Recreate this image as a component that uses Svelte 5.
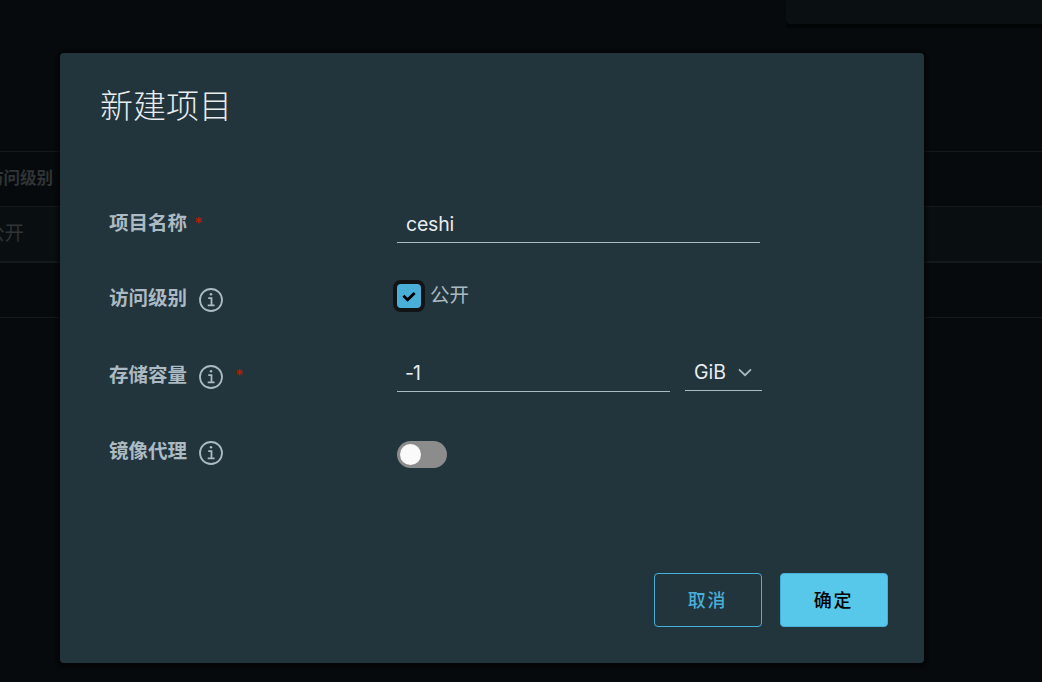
<script lang="ts">
    let name = $state("ceshi");
    let quota = $state("-1");
    let isPublic = $state(true);
    let proxyCache = $state(false);
</script>

{#snippet info()}
    <svg class="info" viewBox="0 0 24 24" aria-hidden="true">
        <circle cx="12" cy="12" r="11" />
        <circle class="dot" cx="12" cy="6.3" r="1.25" />
        <path d="M9.2 10.2h3.3v7.3M8.7 17.4h6.9" />
    </svg>
{/snippet}

<div class="page">
    <div class="top"><div class="summary"></div></div>
    <div class="table">
        <div class="tr head"><span>访问级别</span></div>
        <div class="tr row"><span>公开</span></div>
        <div class="tr foot"></div>
    </div>

    <div class="modal" role="dialog" aria-label="新建项目">
        <h3>新建项目</h3>
        <form>
            <div class="field name">
                <label for="name">项目名称 <i class="req">*</i></label>
                <input id="name" type="text" bind:value={name} />
            </div>
            <div class="field access">
                <span class="label">访问级别 {@render info()}</span>
                <label class="check">
                    <input type="checkbox" bind:checked={isPublic} />
                    <span class="box">
                        {#if isPublic}
                            <svg viewBox="0 0 14 11"><path d="M1.4 4.7l4.2 4 7-6.8" /></svg>
                        {/if}
                    </span>
                    <span class="text">公开</span>
                </label>
            </div>
            <div class="field quota">
                <span class="label">存储容量 {@render info()} <i class="req">*</i></span>
                <input type="text" aria-label="存储容量" bind:value={quota} />
                <div class="unit">
                    GiB
                    <svg viewBox="0 0 14 9"><path d="M1 1.3l6 5.9 6-5.9" /></svg>
                </div>
            </div>
            <div class="field proxy">
                <span class="label">镜像代理 {@render info()}</span>
                <button
                    type="button"
                    class="toggle"
                    class:on={proxyCache}
                    aria-label="镜像代理"
                    onclick={() => (proxyCache = !proxyCache)}
                ></button>
            </div>
        </form>
        <div class="actions">
            <button type="button" class="btn">取消</button>
            <button type="button" class="btn primary">确定</button>
        </div>
    </div>
</div>

<style>
    .page {
        position: relative;
        display: flex;
        flex-direction: column;
        height: 682px;
        overflow: hidden;
        background: #060a0d;
        color: #acbac3;
        font-family: Inter, "Noto Sans CJK SC", sans-serif;
        font-size: 19.5px;
    }
    .page * {
        box-sizing: border-box;
    }
    .top {
        display: flex;
        justify-content: flex-end;
        height: 151px;
    }
    .summary {
        width: 256px;
        height: 24px;
        background: #0a0f11;
        border-radius: 0 0 0 4px;
        box-shadow: 0 4px 1px #020506;
    }
    .tr {
        display: flex;
        align-items: center;
        border-top: 1px solid #14191c;
        white-space: nowrap;
        color: #303436;
    }
    .head {
        height: 55px;
        font-size: 16.5px;
        font-weight: 700;
    }
    .head span {
        margin: -5px 0 0 -13px;
    }
    .row {
        height: 55px;
        background: #090e10;
    }
    .row span {
        margin: -5px 0 0 -15px;
    }
    .foot {
        height: 57px;
        border-top: 2px solid #14191c;
        border-bottom: 1px solid #14191c;
    }

    .modal {
        position: absolute;
        top: 53px;
        left: 60px;
        display: flex;
        flex-direction: column;
        width: 864px;
        height: 610px;
        padding: 35px 36px 36px 40px;
        background: #22343c;
        border-radius: 4px;
        box-shadow: 0 1px 3px 3px rgba(0, 0, 0, 0.5);
    }
    h3 {
        margin: 0;
        color: #e9ecef;
        font-size: 33px;
        font-weight: 200;
        line-height: 36px;
    }
    form {
        padding: 90px 0 0 9px;
    }
    .field {
        display: flex;
        align-items: flex-start;
        height: 76px;
    }
    .name {
        height: 75px;
    }
    .name > label,
    .label {
        display: flex;
        align-items: center;
        width: 288px;
        font-weight: 700;
        line-height: 26px;
    }
    .name > label {
        margin-top: -4px;
    }
    .label {
        margin-top: -4px;
    }
    .req {
        margin-left: 7px;
        color: #b32000;
        font-style: normal;
        font-weight: 600;
        font-size: 16px;
    }
    .info {
        width: 24px;
        height: 24px;
        margin: 4px 0 0 12px;
        fill: none;
        stroke: #acbac3;
        stroke-width: 1.8;
    }
    .info .dot {
        fill: #acbac3;
        stroke: none;
    }
    .info + .req {
        margin-left: 12px;
    }
    input[type="text"] {
        width: 363px;
        height: 39px;
        margin: -10px 0 0;
        padding: 1px 9px 0;
        background: none;
        border: 0;
        border-bottom: 1px solid #acbac3;
        outline: none;
        color: #e9ecef;
        font: inherit;
        letter-spacing: -0.2px;
    }
    .check {
        display: flex;
        align-items: center;
        margin: -9px 0 0 -4px;
        line-height: 26px;
    }
    .check input {
        position: absolute;
        opacity: 0;
    }
    .check .text {
        padding-bottom: 2px;
    }
    .box {
        display: grid;
        place-items: center;
        width: 32px;
        height: 32px;
        margin-right: 5px;
        background: #49afd9;
        border: 4px solid #111314;
        border-radius: 8px;
    }
    .box svg {
        width: 14px;
        height: 11px;
        fill: none;
        stroke: #000;
        stroke-width: 2.8;
    }
    .access .label {
        margin-top: -5px;
    }
    .quota input[type="text"] {
        width: 273px;
        height: 38px;
        margin-top: -11px;
        padding: 0 8px;
        letter-spacing: -1px;
    }
    .unit {
        display: flex;
        align-items: center;
        justify-content: space-between;
        width: 77px;
        height: 37px;
        margin: -11px 0 0 15px;
        padding: 0 10px 0 9px;
        border-bottom: 1px solid #acbac3;
        color: #e9ecef;
    }
    .unit svg {
        width: 14px;
        height: 9px;
        fill: none;
        stroke: #acbac3;
        stroke-width: 1.7;
    }
    .toggle {
        display: flex;
        align-items: center;
        width: 50px;
        height: 27px;
        padding: 0 3px;
        background: #8c8c8c;
        border: 0;
        border-radius: 14px;
    }
    .toggle::before {
        content: "";
        width: 21px;
        height: 21px;
        background: #fafafa;
        border-radius: 50%;
    }
    .toggle.on {
        justify-content: flex-end;
        background: #60b515;
    }
    .actions {
        display: flex;
        justify-content: flex-end;
        gap: 18px;
        margin-top: auto;
    }
    .btn {
        width: 108px;
        height: 54px;
        padding: 0 1px 2px 0;
        background: none;
        border: 1px solid #49afd9;
        border-radius: 4px;
        color: #49afd9;
        font: 500 18px "Noto Sans CJK SC", sans-serif;
        letter-spacing: 1.8px;
    }
    .primary {
        background: #57c8ea;
        color: #000;
    }
</style>
